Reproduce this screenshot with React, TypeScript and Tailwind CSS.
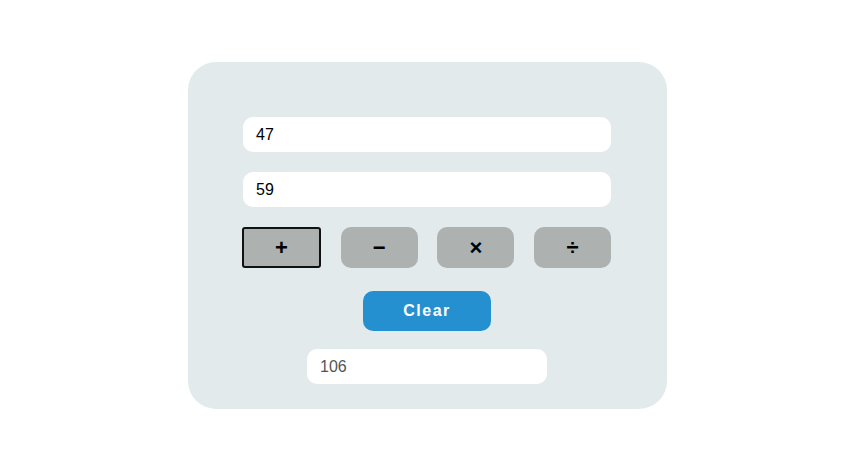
export default function App() {
  const ops = ["+", "−", "×", "÷"];
  return (
    <div className="flex h-[475px] w-[854px] items-start justify-center bg-white pt-[62px] font-['Liberation_Sans',Arial,sans-serif]">
      <div className="flex w-[479px] flex-col items-center rounded-[28px] bg-[#e3eaec] pb-[25px] pt-[55px]">
        <div className="flex w-[368px] flex-col gap-5">
          <input
            readOnly
            value="47"
            className="h-[35px] w-full rounded-[10px] bg-white px-[13px] text-base text-black outline-none"
          />
          <input
            readOnly
            value="59"
            className="h-[35px] w-full rounded-[10px] bg-white px-[13px] text-base text-black outline-none"
          />
          <div className="flex justify-between">
            {ops.map((op, i) =>
              i === 0 ? (
                <button
                  key={op}
                  className="-ml-px flex h-[41px] w-[79px] items-center justify-center rounded-[3px] border-2 border-[#111] bg-[#adb1af] text-[22px] font-bold text-black"
                >
                  {op}
                </button>
              ) : (
                <button
                  key={op}
                  className="flex h-[41px] w-[77px] items-center justify-center rounded-[10px] bg-[#adb1af] text-[22px] font-bold text-black"
                >
                  {op}
                </button>
              )
            )}
          </div>
        </div>
        <button className="mt-[23px] h-[40px] w-[128px] rounded-[10px] bg-[#2490cf] text-base font-bold tracking-[1.5px] text-white">
          Clear
        </button>
        <input
          readOnly
          value="106"
          className="mt-[18px] h-[35px] w-[240px] rounded-[10px] bg-white px-[13px] text-base text-[#555] outline-none"
        />
      </div>
    </div>
  );
}
